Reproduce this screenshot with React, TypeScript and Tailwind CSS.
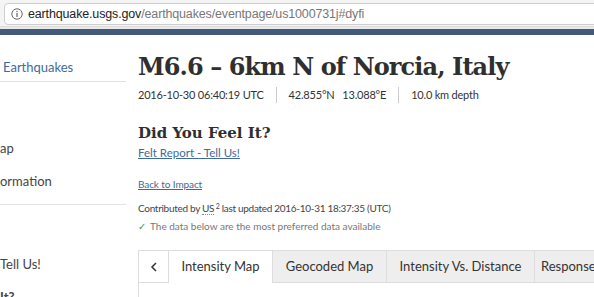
import React from "react";

const sans = { fontFamily: "Lato, 'Open Sans', sans-serif" };

export default function App() {
  return (
    <div className="w-[594px] h-[297px] overflow-hidden bg-white relative" style={sans}>
      {/* browser chrome */}
      <div className="h-[27px] bg-[#f4f4f4] pt-[3px] pl-[4px] border-b border-[#dcdcdc]">
        <div className="h-[22px] w-[640px] bg-white border border-[#cfcfcf] rounded-[4px] flex items-center pl-[6px] gap-[5px]" style={{ fontFamily: "'Liberation Sans', Arial, sans-serif" }}>
          <svg width="12" height="12" viewBox="0 0 12 12">
            <circle cx="6" cy="6" r="5.2" fill="none" stroke="#666" strokeWidth="1" />
            <rect x="5.4" y="5" width="1.2" height="4" fill="#666" />
            <circle cx="6" cy="3.4" r="0.75" fill="#666" />
          </svg>
          <span className="text-[12.5px] text-[#222] tracking-[-0.15px]">
            earthquake.usgs.gov<span className="text-[#777]">/earthquakes/eventpage/us1000731j#dyfi</span>
          </span>
        </div>
      </div>
      <div className="h-[2px] bg-[#e9e9e9]" />
      <div className="h-[6px] bg-[#425b7b]" />

      <div className="flex">
        {/* left nav */}
        <div className="w-[126px] shrink-0 text-[13px] text-[#444]">
          <div className="h-[46px] flex items-end pb-[4px] pl-[3px] text-[#3e6a9e]">Earthquakes</div>
          <div className="border-t border-[#e2e2e2]" />
          <div className="h-[50px]" />
          <div className="h-[33px] flex items-center">ap</div>
          <div className="h-[33px] flex items-center">ormation</div>
          <div className="border-t border-[#e2e2e2] mt-[6px]" />
          <div className="h-[43px]" />
          <div className="h-[33px] flex items-center">Tell Us!</div>
          <div className="h-[33px] flex items-center font-bold">It?</div>
        </div>

        {/* main */}
        <div className="flex-1 pl-[12px] min-w-0">
          <h1 className="mt-[17px] text-[24px] leading-[30px] font-bold text-[#2f2f2f] whitespace-nowrap tracking-[-0.9px]" style={{ fontFamily: "'DejaVu Serif', serif" }}>
            M6.6 – 6km N of Norcia, Italy
          </h1>
          <div className="flex items-center text-[11px] tracking-[-0.2px] text-[#333] mt-[5px] h-[16px]">
            <span className="pr-[12px]">2016-10-30 06:40:19 UTC</span>
            <span className="w-px h-[16px] bg-[#ccc]" />
            <span className="px-[12px]">42.855°N&nbsp;&nbsp;&nbsp;13.088°E</span>
            <span className="w-px h-[16px] bg-[#ccc]" />
            <span className="pl-[12px]">10.0 km depth</span>
          </div>

          <h2 className="mt-[21px] text-[15px] leading-[18px] font-bold text-[#2f2f2f]" style={{ fontFamily: "'DejaVu Serif', serif" }}>
            Did You Feel It?
          </h2>
          <a className="block mt-[3px] text-[11.5px] leading-[16px] text-[#3e6a9e] underline">Felt Report - Tell Us!</a>

          <a className="block mt-[16px] text-[10px] leading-[14px] tracking-[-0.1px] text-[#3e6a9e] underline">Back to Impact</a>
          <div className="mt-[10px] text-[10px] leading-[14px] tracking-[-0.3px] text-[#444]">
            Contributed by <span className="border-b border-dotted border-[#888]">US</span>
            <sup className="text-[7px]"> 2</sup> last updated 2016-10-31 18:37:35 (UTC)
          </div>
          <div className="mt-[4px] text-[10px] leading-[14px] text-[#777] flex items-center gap-[4px]">
            <span className="text-[#4a9a4a] text-[10px]">✓</span>
            <span>The data below are the most preferred data available</span>
          </div>

          {/* tabs */}
          <div className="mt-[17px] flex h-[33px] w-[600px] text-[13px] text-[#333]">
            <div className="w-[31px] flex items-center justify-center border border-[#ddd] bg-white">
              <svg width="8" height="10" viewBox="0 0 8 10"><path d="M6 1 L2 5 L6 9" fill="none" stroke="#333" strokeWidth="1.5" /></svg>
            </div>
            <div className="w-[103px] flex items-center justify-center border-t border-[#ddd] bg-white">Intensity Map</div>
            <div className="w-[114px] flex items-center justify-center border border-r-0 border-[#ddd] bg-[#eeeeee]">Geocoded Map</div>
            <div className="w-[148px] flex items-center justify-center border border-r-0 border-[#ddd] bg-[#eeeeee]">Intensity Vs. Distance</div>
            <div className="w-[120px] flex items-center pl-[6px] border border-[#ddd] bg-[#eeeeee]">Responses</div>
          </div>
          <div className="h-[20px] border-l border-[#ddd]" />
        </div>
      </div>
    </div>
  );
}
